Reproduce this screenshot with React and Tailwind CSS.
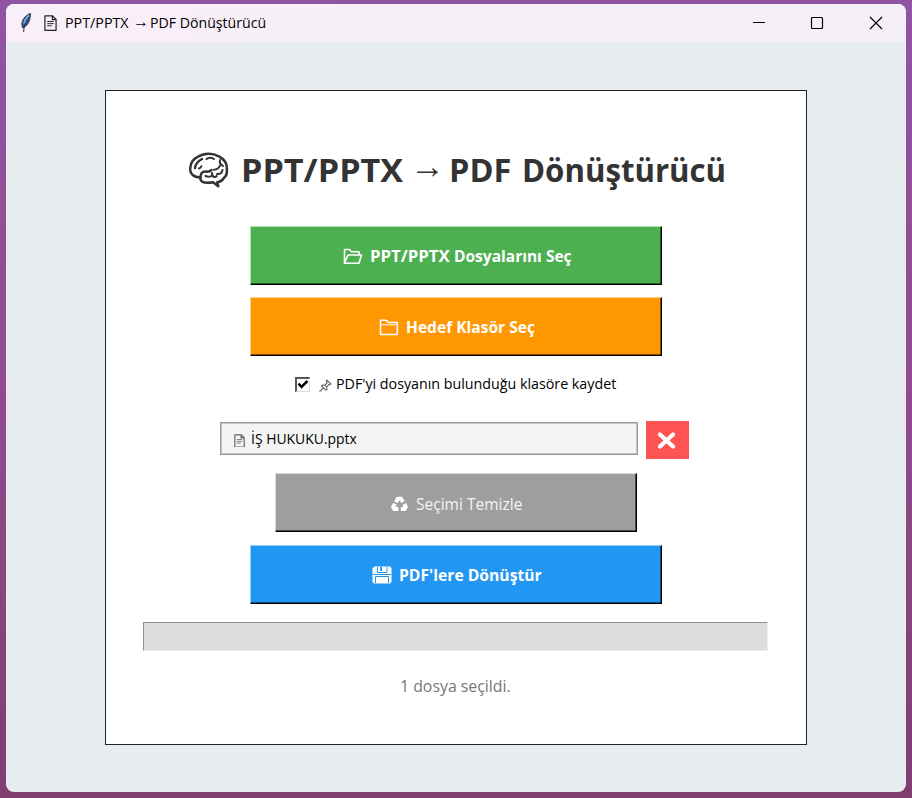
import React from "react";

function Quill() {
  return (
    <svg width="14" height="22" viewBox="0 0 14 22" className="block">
      <path d="M10.500 1.500C7 2.500 2.800 6 2 11c-.3 2 .1 3.800.8 5C6.800 14 9 11 9.800 7c.3-2 .7-3.500.7-5.500z" fill="#345a92" stroke="#33363f" strokeWidth="1" />
      <path d="M9 3.500C6.500 5.500 5 8 4.200 11.500" stroke="#79b4ee" strokeWidth="2" fill="none" />
      <path d="M9.300 4.500C6.500 8 4.200 12 3.600 20" stroke="#2a2a2e" strokeWidth="1" fill="none" />
    </svg>
  );
}

function Doc({ size, color, heavy }) {
  return (
    <svg width={size} height={size * 1.25} viewBox="0 0 14 17.500" fill="none" stroke={color} strokeWidth={heavy} className="block">
      <path d="M1 1h8.200L13 4.800V16.500H1z" strokeLinejoin="round" />
      <path d="M9 1.200V5h3.800" />
      <path d="M3.500 7h7M3.500 9.300h7M3.500 11.600h5" strokeWidth="1" />
    </svg>
  );
}

function Brain() {
  return (
    <svg width="41" height="36" viewBox="0 0 41 36" fill="none" stroke="#333" strokeWidth="2.500" strokeLinecap="round" strokeLinejoin="round" className="block">
      <path d="M12.500 25.500C5 25.500 1.700 21 2.200 16.500 2.500 10.500 6 6.500 10.500 4.400 16 .8 25 .8 30.500 4.200 36 7 39.500 12 38.800 18c.4 3-.5 6-3 8-1.500 2.500-4 4-6.500 4.200l1 4-5.300-4C20 31 17 31 14.500 29.800c-1.700-1-2.500-2.400-2-4.300z" />
      <path d="M12.500 25.500c-.3-4 2-6.300 5.500-6 2 .4 4-.1 5.500-1.500M7 16c.5-4 3-7 7-9" />
      <path d="M18.500 7c2-1.800 5.500-1.800 7.500 0M11 16.500c1-.3 2-1.200 2.500-2.300M32 8c-.8 2.500-.2 4 3 6M32 13.500c-1 2.500-3 4-6 4.200M34.500 18c-.5 3-2.500 4.500-5.500 4M17.500 24c2.300 1 5.200.8 7.500-.5M24 21c-.3 2 0 3.300 1.600 3.800 1.300.4 2.400 0 3.100-.8" strokeWidth="2" />
    </svg>
  );
}

function FolderOpen() {
  return (
    <svg width="20" height="17" viewBox="0 0 20 17" fill="none" stroke="#fff" strokeWidth="1.600" strokeLinejoin="round" className="block shrink-0">
      <path d="M1.500 15V1.500h5l2 2.200h7.500V7M1.500 15.200L5 7h13.500l-2.600 8.200z" />
    </svg>
  );
}

function Folder() {
  return (
    <svg width="20" height="17" viewBox="0 0 20 17" fill="none" stroke="#fff" strokeWidth="1.600" strokeLinejoin="round" className="block shrink-0">
      <path d="M1.500 15.500V1.300h5.800l2 2.200h9v12z" />
      <path d="M2 5.800h16" strokeWidth="1" />
    </svg>
  );
}

function Floppy() {
  return (
    <svg width="20" height="18" viewBox="0 0 20 18" className="block shrink-0">
      <path d="M2.500.5h15.500l1.500 1.500v14l-1.500 1.500h-16L.5 16V2.500z" fill="#fff" />
      <path d="M5.500 1v5.500h9.500V1M3.500 17v-6.500h13V17M.8 8.500h18.400" fill="none" stroke="#2196f3" strokeWidth="1" />
      <path d="M8 1h2v4H8z" fill="#2196f3" />
    </svg>
  );
}

function Recycle() {
  return (
    <svg width="17" height="16" viewBox="0 0 17 16" fill="none" stroke="#fff" strokeWidth="4" className="block shrink-0">
      <path d="M4.800 6.300L7 2.800h3l2 3.200" />
      <path d="M13.300 8l1.500 3-1.300 2H9.800" />
      <path d="M7.500 13H3.300L2.200 11l1.800-3.200" />
    </svg>
  );
}

function Pin() {
  return (
    <svg width="13" height="13" viewBox="0 0 13 13" fill="none" stroke="#666" strokeWidth="1.100" strokeLinejoin="round" className="block">
      <path d="M7.500 1l4.500 4-1.300.8-1-.2-2 2.400.3 2.500-1 .7L2.500 7l.8-1 2.500.2L8 4 7.500 2.500zM4.500 9L.500 12.500M5.800 6.200l2 1.800" />
    </svg>
  );
}

function Button({ className, children }) {
  return (
    <button className={`flex shrink-0 items-center border text-white ${className}`}>
      {children}
    </button>
  );
}

function Label({ className, children }) {
  return <span className={`block w-max shrink-0 origin-left whitespace-nowrap ${className}`}>{children}</span>;
}

export default function App() {
  return (
    <div className="flex h-[798px] w-[912px] bg-linear-to-b from-[#9153a3] via-[#914b8d] to-[#7e3f70] px-1.5 pt-1 pb-1.5 font-['Open_Sans','Liberation_Sans',sans-serif]">
      <div className="flex w-full flex-col overflow-hidden rounded-lg bg-[#e7ecf0]">
        <header className="flex h-[38px] shrink-0 items-center bg-linear-to-r from-[#f9eff8] to-[#f4eff8] pl-3.5 text-black">
          <Quill />
          <span className="ml-2.5 shrink-0"><Doc size={13} color="#222" heavy={1.3} /></span>
          <div className="ml-2 flex w-[670px] items-center text-[14.500px]">
            <span className="w-[68px] shrink-0"><Label className="scale-x-[.985]">PPT/PPTX</Label></span>
            <span className="w-[17px] shrink-0 -translate-y-0.5 text-[16px]">→</span>
            <Label className="scale-x-[.975]">PDF Dönüştürücü</Label>
          </div>
          <svg width="150" height="14" viewBox="0 0 150 14" fill="none" stroke="#000" strokeWidth="1.200" className="ml-1.5 shrink-0">
            <path d="M12 6.500h12" />
            <rect x="70.500" y="1.500" width="11" height="11" rx="1" />
            <path d="M129 1l12 12M141 1l-12 12" />
          </svg>
        </header>
        <main className="flex flex-1 flex-col items-center pt-12">
          <section className="flex h-[655px] w-[702px] flex-col items-center border border-[#222] bg-white">
            <h1 className="mt-[54px] flex h-[50px] w-[536px] items-center text-[33px] font-bold text-[#333]">
              <span className="w-[53px] shrink-0"><Brain /></span>
              <span className="w-[169px] shrink-0"><Label className="scale-x-[1.034]">PPT/PPTX</Label></span>
              <span className="w-[39px] shrink-0 -translate-y-[5px] text-[35px] font-normal">→</span>
              <span className="w-[73px] shrink-0"><Label className="scale-x-[.985]">PDF</Label></span>
              <Label className="scale-x-[.945]">Dönüştürücü</Label>
            </h1>
            <Button className="mt-[31px] h-[59px] w-[412px] border-t-[#a6eda9] border-r-black border-b-black border-l-[#a6eda9] bg-[#4caf50] pt-px pl-[92px] shadow-[inset_-1px_-1px_#1f5c22]">
              <FolderOpen />
              <span className="ml-[7px] flex text-[16px] font-bold">
                <span className="w-[84px]"><Label className="scale-x-[1.05]">PPT/PPTX</Label></span>
                <Label className="scale-x-[.97]">Dosyalarını Seç</Label>
              </span>
            </Button>
            <Button className="mt-3 h-[59px] w-[412px] border-t-[#ffd08a] border-r-black border-b-black border-l-[#ffd08a] bg-[#ff9800] pt-px pl-[128px] shadow-[inset_-1px_-1px_#7d4b00]">
              <Folder />
              <Label className="ml-[7px] scale-x-[.973] text-[16px] font-bold">Hedef Klasör Seç</Label>
            </Button>
            <div className="mt-[18px] flex h-5 w-[322px] items-center text-black">
              <span className="mr-[9px] block size-[15px] shrink-0 border-t-2 border-r border-b border-l-2 border-t-[#555] border-r-[#ddd] border-b-[#ddd] border-l-[#555]">
                <svg width="12" height="12" viewBox="0 0 12 12" className="block"><path d="M1.500 4.500L4.500 8l6-6" fill="none" stroke="#000" strokeWidth="2.500" /></svg>
              </span>
              <span className="mt-0.5 w-[17px] shrink-0"><Pin /></span>
              <Label className="scale-x-[.983] text-[14.500px]">PDF'yi dosyanın bulunduğu klasöre kaydet</Label>
            </div>
            <div className="mt-[27px] mr-[3px] flex h-[38px] w-[469px] items-start">
              <div className="mt-px flex h-[33px] w-[418px] items-center border border-[#999] bg-[#f4f4f4] pl-[13px] shadow-[inset_0_0_0_1px_#c4c4c4]">
                <span className="mt-1 w-[17px] shrink-0"><Doc size={11} color="#666" heavy={1.5} /></span>
                <Label className="scale-x-[.96] text-[14.500px]">İŞ HUKUKU.pptx</Label>
              </div>
              <button className="ml-2 flex h-[38px] w-[43px] items-center justify-center bg-[#ff5252] pr-0.5">
                <svg width="19" height="17" viewBox="0 0 19 17" className="block"><path d="M3 2.500l13 12M16 2.500l-13 12" stroke="#fff" strokeWidth="4.200" strokeLinecap="round" /></svg>
              </button>
            </div>
            <Button className="mt-3.5 h-[59px] w-[362px] border-t-[#dadada] border-r-black border-b-black border-l-[#dadada] bg-[#9e9e9e] pt-[3px] pl-[115px] shadow-[inset_-1px_-1px_#4a4a4a]">
              <Recycle />
              <Label className="ml-2 scale-x-[.97] text-[16px] text-[#f4f4f4]">Seçimi Temizle</Label>
            </Button>
            <Button className="mt-[13px] h-[59px] w-[412px] border-t-[#90d0ff] border-r-black border-b-black border-l-[#90d0ff] bg-[#2196f3] pt-px pl-[121px] shadow-[inset_-1px_-1px_#0f4c7d]">
              <Floppy />
              <Label className="ml-[7px] scale-x-[.98] text-[16px] font-bold">PDF'lere Dönüştür</Label>
            </Button>
            <div className="mt-[18px] mr-px h-[29px] w-[625px] shrink-0 border border-t-[#8d8d8d] border-r-[#eee] border-b-[#eee] border-l-[#8d8d8d] bg-[#ddd]" />
            <div className="mt-[23px] w-[112px]">
              <Label className="scale-x-[.99] text-[16px] text-[#777]">1 dosya seçildi.</Label>
            </div>
          </section>
        </main>
      </div>
    </div>
  );
}
